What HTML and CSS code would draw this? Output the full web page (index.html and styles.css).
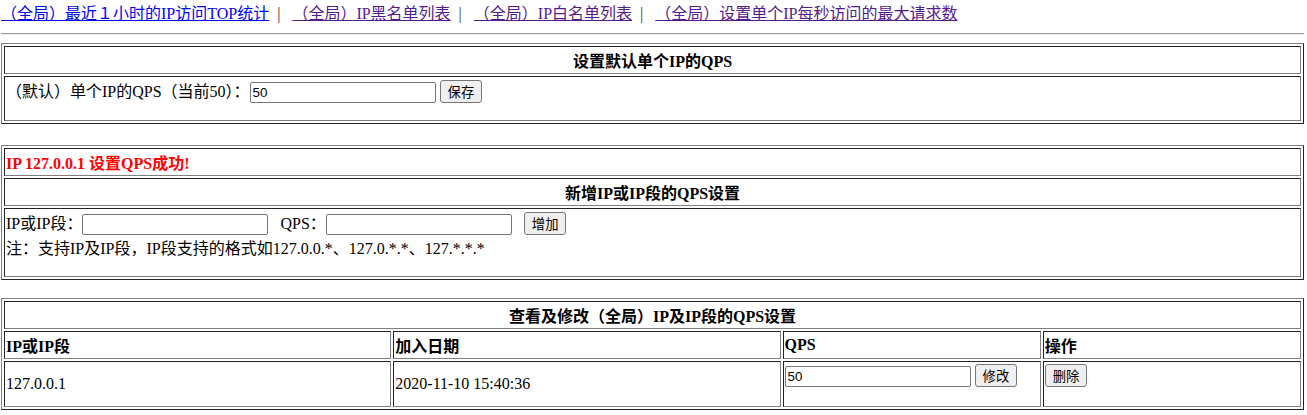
FILE: index.html
```html
<!DOCTYPE html>
<html lang="zh-CN">
<head>
<meta charset="utf-8">
<title>QPS设置</title>
<link rel="stylesheet" href="styles.css">
</head>
<body>
<div class="nav">
  <a class="lnk" href="#">（全局）最近１小时的IP访问TOP统计</a><span class="sep">&nbsp;&nbsp;|&nbsp;&nbsp;&nbsp;</span><a class="lnk visited" href="#">（全局）IP黑名单列表</a><span class="sep">&nbsp;&nbsp;|&nbsp;&nbsp;&nbsp;</span><a class="lnk visited" href="#">（全局）IP白名单列表</a><span class="sep">&nbsp;&nbsp;|&nbsp;&nbsp;&nbsp;</span><a class="lnk visited" href="#">（全局）设置单个IP每秒访问的最大请求数</a>
</div>
<hr class="rule">

<table class="grid t1">
  <tr><th class="head">设置默认单个IP的QPS</th></tr>
  <tr><td class="cell"><div class="frm">（默认）单个IP的QPS（当前50）：<input class="inp" type="text" value="50"> <button class="btn" type="button">保存</button></div></td></tr>
</table>

<table class="grid t2">
  <tr><td class="cell msg">IP 127.0.0.1 设置QPS成功!</td></tr>
  <tr><th class="head">新增IP或IP段的QPS设置</th></tr>
  <tr><td class="cell"><div class="frm">IP或IP段：<input class="inp" type="text"> &nbsp; QPS：<input class="inp" type="text"> &nbsp; <button class="btn" type="button">增加</button><br>注：支持IP及IP段，IP段支持的格式如127.0.0.*、127.0.*.*、127.*.*.*</div></td></tr>
</table>

<table class="grid t3">
  <tr><th class="head" colspan="4">查看及修改（全局）IP及IP段的QPS设置</th></tr>
  <tr>
    <th class="colh w30">IP或IP段</th>
    <th class="colh w30">加入日期</th>
    <th class="colh w20">QPS</th>
    <th class="colh w20">操作</th>
  </tr>
  <tr>
    <td class="cell">127.0.0.1</td>
    <td class="cell">2020-11-10 15:40:36</td>
    <td class="cell"><div class="frm frm-row"><input class="inp" type="text" value="50"> <button class="btn" type="button">修改</button></div></td>
    <td class="cell"><div class="frm frm-row"><button class="btn" type="button">删除</button></div></td>
  </tr>
</table>
</body>
</html>
```
FILE: styles.css
```css
html, body {
  background: #fff;
}
body {
  margin: 0 3px 0 1px;
  font-family: "Liberation Serif", "Noto Sans CJK SC", serif;
  font-size: 16px;
  color: #000;
}
.nav {
  padding-top: 3px;
  line-height: 22px;
}
.lnk {
  color: #0000ee;
  text-decoration: underline;
}
.lnk.visited {
  color: #551a8b;
}
.sep {
  color: #333;
}
.rule {
  margin: 8px 0;
  border: 0;
  border-top: 1px solid #9a9a9a;
  border-bottom: 1px solid #eeeeee;
  height: 0;
}
.grid {
  width: 100%;
  border-collapse: separate;
  border-spacing: 2px;
  border: 1px solid;
  border-color: #808080 #222 #222 #808080;
}
.grid th, .grid td {
  border: 1px solid;
  border-color: #222 #808080 #808080 #222;
  padding: 1px;
}
.t1 { margin-top: 0; }
.t2 { margin-top: 21px; }
.t3 { margin-top: 18px; }
.head {
  font-weight: bold;
  text-align: center;
}
.colh {
  font-weight: bold;
  text-align: left;
}
.w30 { width: 30%; }
.w20 { width: 20%; }
.msg {
  color: #ff0000;
  font-weight: bold;
}
.frm {
  padding-bottom: 16px;
}
.frm-row {
  padding-top: 1px;
  padding-bottom: 18px;
}
.inp {
  font-family: "Liberation Sans", Arial, sans-serif;
  font-size: 13.333px;
  width: 180px;
  padding: 1px 2px;
  border: 1px solid #767676;
  border-radius: 2px;
  height: 17px;
  vertical-align: baseline;
  box-sizing: content-box;
}
.btn {
  font-family: "Noto Sans CJK SC", "Liberation Sans", sans-serif;
  font-size: 13.333px;
  line-height: 19px;
  padding: 1px 7px;
  background: #efefef;
  border: 1px solid #767676;
  border-radius: 3px;
  color: #000;
}
```
